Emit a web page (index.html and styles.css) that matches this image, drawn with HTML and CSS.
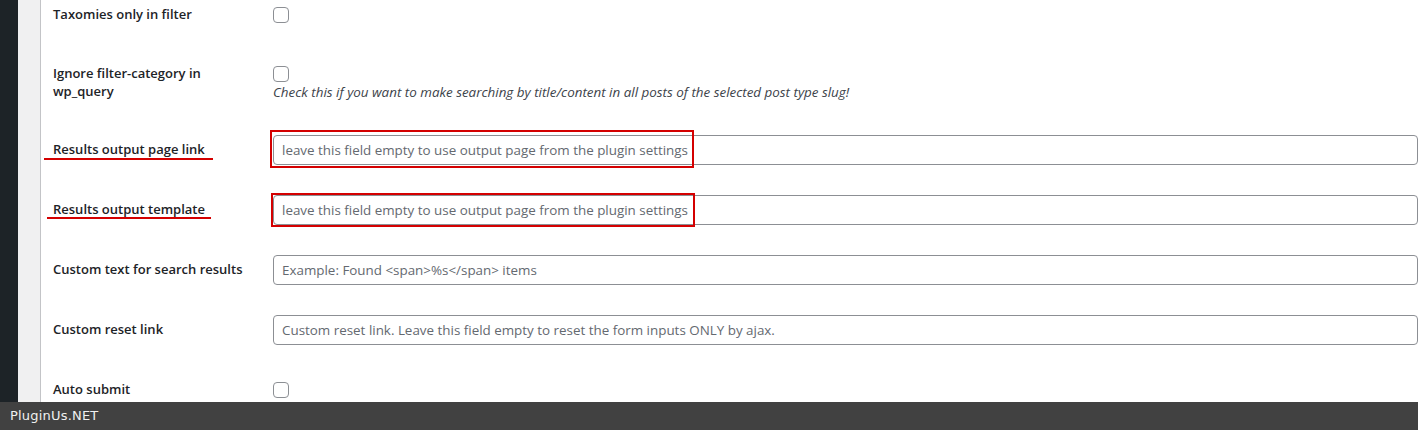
FILE: index.html
```html
<!DOCTYPE html>
<html>
<head>
<meta charset="utf-8">
<link rel="stylesheet" href="styles.css">
</head>
<body>
<div class="screen">
  <div class="adminbar"></div>
  <div class="gutter"></div>
  <main class="content">
    <div class="form-table">
      <div class="row row-check row-first">
        <div class="label">Taxomies only in filter</div>
        <div class="field"><span class="checkbox"></span></div>
      </div>
      <div class="row row-check">
        <div class="label">Ignore filter-category in wp_query</div>
        <div class="field"><span class="checkbox"></span>
          <p class="description">Check this if you want to make searching by title/content in all posts of the selected post type slug!</p>
        </div>
      </div>
      <div class="row">
        <div class="label">Results output page link</div>
        <div class="field"><div class="input">leave this field empty to use output page from the plugin settings</div></div>
      </div>
      <div class="row">
        <div class="label">Results output template</div>
        <div class="field"><div class="input">leave this field empty to use output page from the plugin settings</div></div>
      </div>
      <div class="row">
        <div class="label">Custom text for search results</div>
        <div class="field"><div class="input">Example: Found &lt;span&gt;%s&lt;/span&gt; items</div></div>
      </div>
      <div class="row">
        <div class="label">Custom reset link</div>
        <div class="field"><div class="input">Custom reset link. Leave this field empty to reset the form inputs ONLY by ajax.</div></div>
      </div>
      <div class="row row-check">
        <div class="label">Auto submit</div>
        <div class="field"><span class="checkbox"></span></div>
      </div>
    </div>
  </main>
  <div class="mark mark-underline u1"></div>
  <div class="mark mark-underline u2"></div>
  <div class="mark mark-box b1"></div>
  <div class="mark mark-box b2"></div>
  <footer class="footer">PluginUs.NET</footer>
</div>
</body>
</html>
```

FILE: styles.css
```css
* { box-sizing: border-box; }
html, body { margin: 0; padding: 0; }
body {
  width: 1418px;
  height: 430px;
  overflow: hidden;
  background: #fff;
  font-family: "Open Sans", "Noto Sans", sans-serif;
}
.screen {
  position: relative;
  width: 1418px;
  height: 430px;
  display: flex;
  overflow: hidden;
}
.adminbar {
  width: 18px;
  flex: none;
  background: #1d2327;
}
.gutter {
  width: 23px;
  flex: none;
  background: #f0f0f1;
  border-right: 1px solid #c3c4c7;
}
.content {
  flex: 1;
  background: #fff;
  padding-left: 12px;
}
.form-table {
  margin-top: -15px;
}
.row {
  display: flex;
}
.label {
  width: 220px;
  flex: none;
  padding: 20px 10px 20px 0;
  font-size: 13px;
  font-weight: 600;
  line-height: 18px;
  color: #1d2327;
}
.row-first .label { padding-bottom: 21px; }
.field {
  flex: 1;
  padding: 15px 0 15px 0;
}
.row-check .field { padding-top: 22px; }
.checkbox {
  display: block;
  width: 16px;
  height: 16px;
  border: 1px solid #8c8f94;
  border-radius: 4px;
  background: #fff;
}
.description {
  margin: 1px 0 0;
  font-size: 13.4px;
  font-style: italic;
  line-height: 18px;
  color: #3c434a;
}
.input {
  height: 30px;
  border: 1px solid #8c8f94;
  border-radius: 4px;
  padding: 0 8px;
  font-size: 13.4px;
  line-height: 28px;
  color: #646970;
  white-space: nowrap;
}
.mark { position: absolute; }
.mark-underline {
  height: 2px;
  background: #d40000;
}
.u1 { left: 44px; top: 158px; width: 169px; }
.u2 { left: 47px; top: 217px; width: 164px; }
.mark-box {
  border: 2px solid #d40000;
}
.b1 { left: 270px; top: 130px; width: 424px; height: 38px; }
.b2 { left: 271px; top: 193px; width: 424px; height: 34px; }
.footer {
  position: absolute;
  left: 0;
  right: 0;
  bottom: 0;
  height: 28px;
  background: #414141;
  color: #f0f0f0;
  font-family: "DejaVu Sans", sans-serif;
  font-size: 13px;
  line-height: 28px;
  padding-left: 10px;
  letter-spacing: 0.2px;
}
```
